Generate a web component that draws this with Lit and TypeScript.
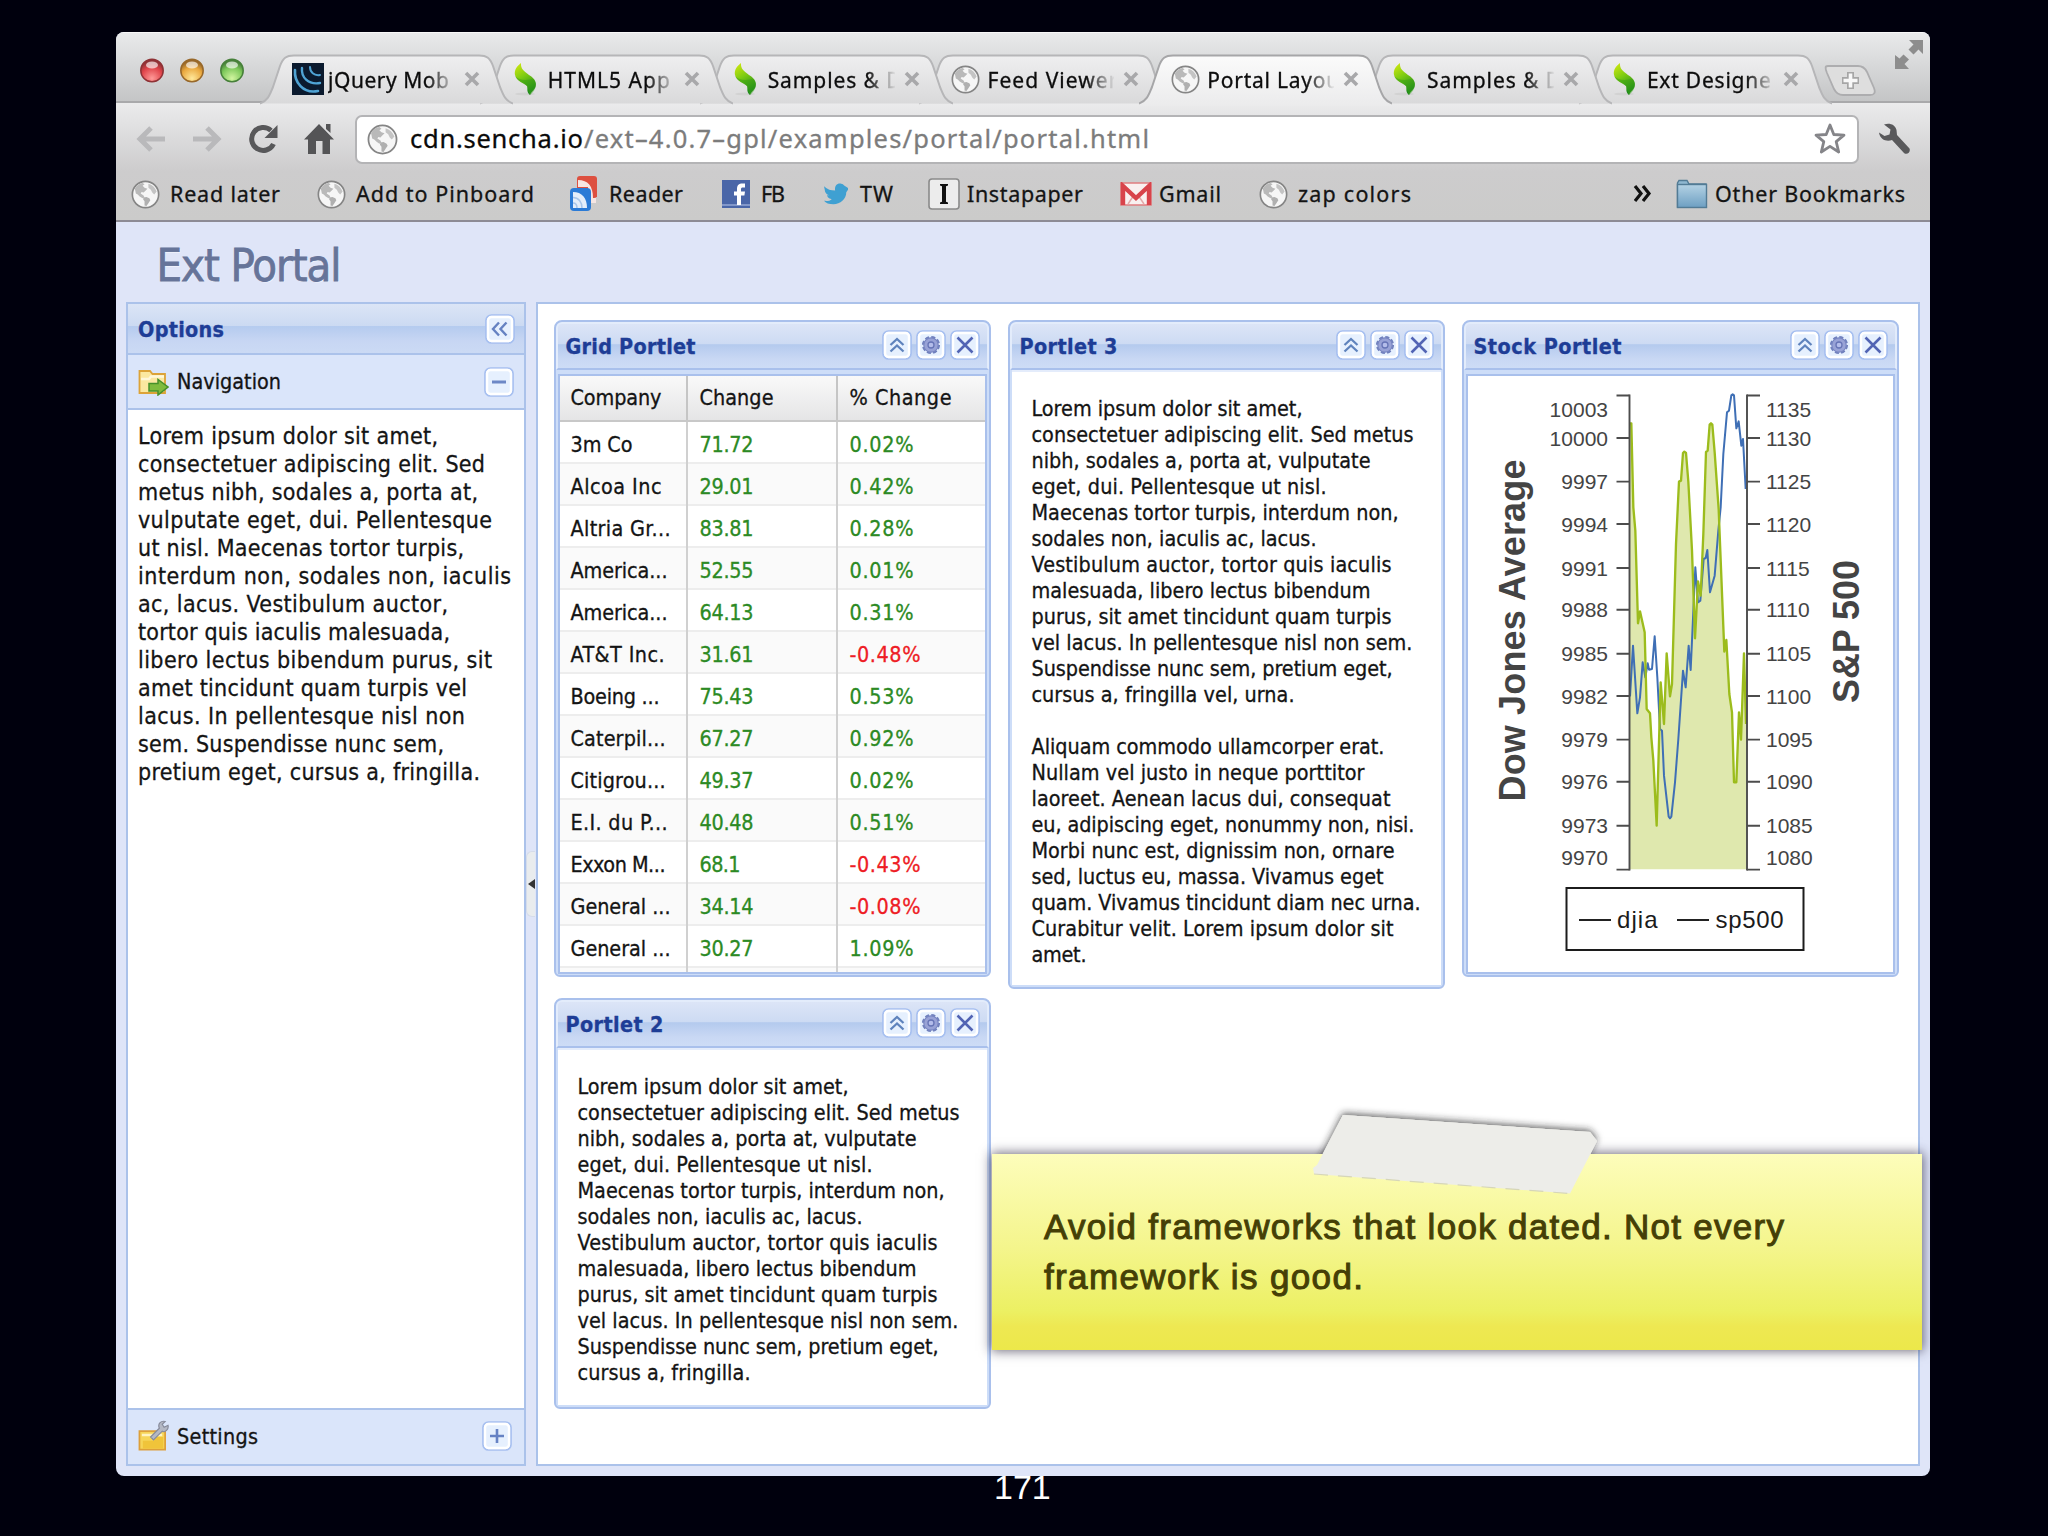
import { LitElement, html, css, svg } from "lit";
import { customElement, property } from "lit/decorators.js";

/* One line of text, tracked so that it fills the width given in w. */
@customElement("fit-text")
class FitText extends LitElement {
  @property({ type: Number }) w = 0;
  @property() text = "";
  static styles = css`
    :host { display: block; white-space: pre; }
    .line { display: inline-block; }
  `;
  render() {
    return html`<span class="line">${this.text}</span>`;
  }
  updated() {
    const el = this.renderRoot.querySelector(".line") as HTMLElement;
    if (!el || !this.w || !this.text) return;
    el.style.letterSpacing = "0px";
    const natural = el.getBoundingClientRect().width;
    const n = Math.max(1, this.text.length - 1);
    el.style.letterSpacing = ((this.w - natural) / n).toFixed(3) + "px";
  }
}

const t = (text: string, w: number, cls = "") => html`<fit-text class=${cls} .text=${text} .w=${w}></fit-text>`;

const globe = (s: number) => html`<svg width=${s} height=${s} viewBox="0 0 30 30">
  <circle cx="15" cy="15" r="13.6" fill="#f6f6f6" stroke="#858585" stroke-width="1.7"/>
  <path d="M4 9C6 5 9 3.5 12 3L14 4.5L12 6L14 8L17 9L15 11L13 13L11 12.5L10 14L13 16L14 18L12 19L9 17L7 15L5 14Z" fill="#b9b9b9"/>
  <path d="M13 18L16 17.5L19 19L20 21L18 24L16 27L14 26.5L14 22L12.5 20Z" fill="#b0b0b0"/>
  <path d="M18 4C22 5 25 8 26.5 12L24 15L22 13L20.5 10L18 8Z" fill="#c4c4c4"/>
</svg>`;

const jquery = html`<svg width="32" height="32" viewBox="0 0 32 32">
  <rect width="32" height="32" fill="#0b1a2e"/>
  <g fill="none" stroke="#4fa3d4" stroke-linecap="round">
    <path d="M3 7C2 19 11 31 26 28" stroke-width="2.600"/>
    <path d="M10 5C9 14 16 22 28 20" stroke-width="2.400"/>
    <path d="M18 4C18 9 22 13 28 12" stroke-width="2"/>
  </g>
</svg>`;

const sencha = html`<svg width="26" height="34" viewBox="0 0 26 34">
  <defs><linearGradient id="sg" x1="0" y1="0" x2="0.4" y2="1">
    <stop offset="0" stop-color="#d8ea10"/><stop offset=".5" stop-color="#7ccb12"/><stop offset="1" stop-color="#1f8a1c"/>
  </linearGradient></defs>
  <ellipse cx="13" cy="32" rx="10" ry="1.5" fill="#d2d2d2"/>
  <path d="M9 1C8.500 7 12 9 17 13C24 17 25 22 23 26C21 29 19 30 18 33C14 30 16 26 15 24C12 21 5 20 3 13C2 8 5 4 9 1Z" fill="url(#sg)"/>
  <path d="M3 14C6 20 12 20 15 24C17 27 16 30 18 33C25 27 26 20 20 17C13 19 7 18 3 14Z" fill="#36a015" opacity=".5"/>
</svg>`;

const closeX = html`<svg width="16" height="16" viewBox="0 0 16 16"><path d="M2 2L14 14M14 2L2 14" stroke="#a8a8aa" stroke-width="3.600"/></svg>`;

const bmIcons: Record<string, unknown> = {
  globe: globe(29),
  reader: html`<svg width="32" height="38" viewBox="0 0 32 38">
    <rect x="7" y="1" width="20" height="22" rx="3" fill="#dd5040"/><path d="M8 5c10 0 15 6 15 18h3v5h-8V12h-10z" fill="#f6e6e3"/>
    <path d="M22 5h5v17h-2C25 14 24 9 22 5z" fill="#dd5040"/>
    <rect x="0" y="13" width="21" height="23" rx="4" fill="#2b7bd6"/>
    <path d="M3 17c9 0 14 6 14 16h-14z" fill="#e4eefa"/><path d="M3 22.500c5.500 0 9 4.500 9 10.500M3 28c2.500 0 4 2 4 5" fill="none" stroke="#a9c6ea" stroke-width="1.500"/>
  </svg>`,
  fb: html`<svg width="28" height="28" viewBox="0 0 28 28"><rect width="28" height="28" fill="#4a66a8"/>
    <rect y="24" width="28" height="2" fill="#8297c9"/>
    <path d="M15 25V15.500h-3v-4h3V9c0-3.800 2-5.500 5.300-5.500H23v4h-2c-1.600 0-2 .6-2 2v2h4l-.6 4H19V25z" fill="#fff"/></svg>`,
  tw: html`<svg width="30" height="24" viewBox="0 0 30 28"><path d="M1 5C5 9 9 10 14 10C13 4 17 1 21 2C23 2.300 24 3.500 25 4.500L29 7L29 9L27 12C27 20 20 26 12 26C7 26 3 25 1 22C5 22.500 8 22 10 20C6 19.500 5 17 4.500 15.500L7 15.500C3 14 2 11 2 9.500Z" fill="#3fa0d2"/></svg>`,
  insta: html`<svg width="32" height="32" viewBox="0 0 32 32"><rect x="1" y="1" width="30" height="30" rx="3" fill="#ececec" stroke="#8a8a8a" stroke-width="1.600"/>
    <path d="M12 6h8v1.600l-2 .6v15.600l2 .6V26h-8v-1.600l2-.6V8.200l-2-.6z" fill="#111"/></svg>`,
  gmail: html`<svg width="32" height="24" viewBox="0 0 32 24"><rect x="1" y="1" width="30" height="22" fill="#f9f0f0" stroke="#e07d80" stroke-width="1.500"/>
    <path d="M8 22L14 13M24 22L18 13" stroke="#e3a9a9" stroke-width="1.500"/>
    <path d="M3 23V4L16 16L29 4V23" fill="none" stroke="#d8434b" stroke-width="4.400"/></svg>`,
  folder: html`<svg width="32" height="30" viewBox="0 0 32 30">
    <defs><linearGradient id="fg" x1="0" y1="0" x2="0" y2="1"><stop offset="0" stop-color="#b4d2e4"/><stop offset="1" stop-color="#6d9fc2"/></linearGradient></defs>
    <path d="M1.500 28V4L3 1.500H11L13 5H30V28Z" fill="#8fb7d0" stroke="#527b95" stroke-width="1.400"/>
    <rect x="1.500" y="5.500" width="29" height="23" fill="url(#fg)" stroke="#527b95" stroke-width="1.400"/></svg>`,
};

const glyphs: Record<string, unknown> = {
  up: svg`<path d="M8 14.500L14.500 8.500L21 14.500M8 21L14.500 15L21 21" fill="none" stroke="#5f83bd" stroke-width="2.300"/>`,
  gear: svg`<circle cx="14.500" cy="14.500" r="7.800" fill="none" stroke="#7080bd" stroke-width="2.500" stroke-dasharray="4 2.130"/>
    <circle cx="14.500" cy="14.500" r="7.200" fill="#98a2d6" stroke="#7886c2" stroke-width="1.200"/><circle cx="14.500" cy="14.500" r="3" fill="#b4bdea" stroke="#6674b6" stroke-width="1.300"/>`,
  close: svg`<path d="M7 7L22 22M22 7L7 22" fill="none" stroke="#5264b4" stroke-width="2.600"/>`,
  left: svg`<path d="M13.500 8L7.500 14.500L13.500 21M21 8L15 14.500L21 21" fill="none" stroke="#6582c2" stroke-width="2.400"/>`,
  minus: svg`<path d="M7.500 14.500H21.500" stroke="#6d88c6" stroke-width="3"/>`,
  plus: svg`<path d="M7.500 14.500H21.500M14.500 7.500V21.500" stroke="#6682c4" stroke-width="2.600"/>`,
};
const tool = (k: string) => html`<svg width="30" height="30" viewBox="-.5 -.5 30 30">
  <rect x=".5" y=".5" width="28" height="28" rx="5.500" fill="#e4edfd" stroke="#a6bff0" stroke-width="1.700"/>
  <rect x="2.500" y="2.500" width="24" height="24" rx="3.500" fill="#e6f0fe" stroke="#fff" stroke-width="2.400"/>${glyphs[k]}</svg>`;

const tabs = [
  { icon: jquery, text: "jQuery Mob", w: 121 },
  { icon: sencha, text: "HTML5 App", w: 122 },
  { icon: sencha, text: "Samples & D", w: 134 },
  { icon: globe(29), text: "Feed Viewer", w: 130 },
  { icon: globe(29), text: "Portal Layou", w: 132, active: true },
  { icon: sencha, text: "Samples & D", w: 134 },
  { icon: sencha, text: "Ext Designe", w: 124 },
];

const bookmarks = [
  { i: "globe", s: "Read later", w: 110, x: 131 },
  { i: "globe", s: "Add to Pinboard", w: 178, x: 317 },
  { i: "reader", s: "Reader", w: 74, x: 570 },
  { i: "fb", s: "FB", w: 24, x: 722 },
  { i: "tw", s: "TW", w: 33, x: 821 },
  { i: "insta", s: "Instapaper", w: 116, x: 928 },
  { i: "gmail", s: "Gmail", w: 62, x: 1120 },
  { i: "globe", s: "zap colors", w: 113, x: 1259 },
];
const bookmarkEnd = 1633;

const sideText: [string, number][] = [
  ["Lorem ipsum dolor sit amet,", 300], ["consectetuer adipiscing elit. Sed", 347], ["metus nibh, sodales a, porta at,", 340],
  ["vulputate eget, dui. Pellentesque", 354], ["ut nisl. Maecenas tortor turpis,", 326], ["interdum non, sodales non, iaculis", 373],
  ["ac, lacus. Vestibulum auctor,", 310], ["tortor quis iaculis malesuada,", 312], ["libero lectus bibendum purus, sit", 354],
  ["amet tincidunt quam turpis vel", 329], ["lacus. In pellentesque nisl non", 327], ["sem. Suspendisse nunc sem,", 306], ["pretium eget, cursus a, fringilla.", 342],
];
const lorem: [string, number][] = [
  ["Lorem ipsum dolor sit amet,", 271], ["consectetuer adipiscing elit. Sed metus", 382], ["nibh, sodales a, porta at, vulputate", 339],
  ["eget, dui. Pellentesque ut nisl.", 295], ["Maecenas tortor turpis, interdum non,", 367], ["sodales non, iaculis ac, lacus.", 285],
  ["Vestibulum auctor, tortor quis iaculis", 360], ["malesuada, libero lectus bibendum", 339], ["purus, sit amet tincidunt quam turpis", 360],
  ["vel lacus. In pellentesque nisl non sem.", 381], ["Suspendisse nunc sem, pretium eget,", 361],
];
const portlet2: [string, number][] = [...lorem, ["cursus a, fringilla.", 173]];
const portlet3: [string, number][] = [
  ...lorem, ["cursus a, fringilla vel, urna.", 263], [" ", 0],
  ["Aliquam commodo ullamcorper erat.", 353], ["Nullam vel justo in neque porttitor", 333], ["laoreet. Aenean lacus dui, consequat", 359],
  ["eu, adipiscing eget, nonummy non, nisi.", 383], ["Morbi nunc est, dignissim non, ornare", 363], ["sed, luctus eu, massa. Vivamus eget", 352],
  ["quam. Vivamus tincidunt diam nec urna.", 389], ["Curabitur velit. Lorem ipsum dolor sit", 362], ["amet.", 55],
];

const rows: [string, number, string, string][] = [
  ["3m Co", 62, "71.72", "0.02%"], ["Alcoa Inc", 91, "29.01", "0.42%"], ["Altria Gr...", 100, "83.81", "0.28%"],
  ["America...", 97, "52.55", "0.01%"], ["America...", 97, "64.13", "0.31%"], ["AT&T Inc.", 94, "31.61", "-0.48%"],
  ["Boeing ...", 89, "75.43", "0.53%"], ["Caterpil...", 95, "67.27", "0.92%"], ["Citigrou...", 95, "49.37", "0.02%"],
  ["E.I. du P...", 97, "40.48", "0.51%"], ["Exxon M...", 95, "68.1", "-0.43%"], ["General ...", 100, "34.14", "-0.08%"],
  ["General ...", 100, "30.27", "1.09%"],
];

const tickY = [396.5, 439, 482.6, 525, 569, 610.8, 654.7, 697, 740.6, 782.8, 826.7, 870.6];
const labelY = [410.5, 439, 482.6, 525, 569, 610.8, 654.7, 697, 740.6, 782.8, 826.7, 858.6];
const leftLabels = ["10003", "10000", "9997", "9994", "9991", "9988", "9985", "9982", "9979", "9976", "9973", "9970"];
const rightLabels = ["1135", "1130", "1125", "1120", "1115", "1110", "1105", "1100", "1095", "1090", "1085", "1080"];
const djia = "60,118 64,118 70,370 76,440 84,718 90,682 104,745 110,975 120,988 124,1060 130,1130 140,1325 152,895 162,1020 170,808 180,937 186,900 198,480 207,293 213,290 219,207 223,203 228,207 235,293 246,500 255,763 264,592 272,635 280,450 288,204 293,200 299,122 303,118 307,122 314,205 326,376 343,803 349,768 358,930 366,985 372,1195 379,1195 387,985 393,1067 402,808 408,1020";
const sp = "60,937 69,785 82,988 90,940 98,835 106,880 113,838 117,857 126,855 134,757 142,880 150,1035 156,1040 162,1175 176,1298 180,1303 184,1298 195,1195 205,1065 219,860 227,910 236,785 242,858 256,550 264,655 271,650 281,525 287,522 292,498 300,625 314,575 325,440 332,370 340,210 351,85 357,80 364,34 368,31 372,34 379,133 386,112 394,185 399,165 407,315";

@customElement("app-root")
class AppRoot extends LitElement {
  static styles = css`
    :host { display: block; }
    * { box-sizing: border-box; }
    svg { display: block; flex: none; }
    .slide { position: relative; width: 2048px; height: 1536px; background: #00000d; padding: 32px 0 0 116px; overflow: hidden; }
    .window { width: 1814px; height: 1444px; border-radius: 8px; overflow: hidden; background: #dfe5f8; display: flex; flex-direction: column;
      font-family: "DejaVu Sans Condensed", "DejaVu Sans", sans-serif; font-stretch: condensed; color: #141414; -webkit-text-stroke: .3px; }
    .strip { height: 71px; flex: none; display: flex; align-items: flex-start; background: linear-gradient(#e9eaeb, #dcddde 35%, #c4c5c6);
      border-top: 1px solid #f8f8f8; border-bottom: 2px solid #a9a9ab; }
    .lights { display: flex; gap: 16px; padding: 25px 0 0 24px; width: 144px; flex: none; }
    .tabs { display: flex; margin-top: 21px; }
    .tab { position: relative; width: 253px; height: 50px; margin-right: -33.2px; flex: none; display: flex; align-items: center; padding-left: 32px; }
    .tab .shape { position: absolute; left: 0; top: 0; }
    .ticon { position: relative; width: 36px; }
    .tlabel { position: relative; width: 127px; overflow: hidden; font: 21px/30px "Noto Sans", sans-serif; color: #0c0c0c; margin-top: 1px;
      -webkit-mask-image: linear-gradient(90deg, #000 78%, transparent 101%); mask-image: linear-gradient(90deg, #000 78%, transparent 101%); }
    .tclose { position: relative; margin-left: 9px; }
    .newtab { margin: 30px 0 0 25px; }
    .full { margin: 7px 0 0 16px; }
    .toolbar { height: 119px; flex: none; background: linear-gradient(#ebebec, #dbdbdc 30%, #cdcccd 58%, #cbcbca); border-bottom: 2px solid #8d8b95; }
    .nav { display: flex; align-items: center; gap: 26px; padding: 11px 0 0 20px; height: 61px; }
    .omni { width: 1504px; height: 49px; margin-left: -5px; border: 2px solid #b4b4b6; border-radius: 7px; background: #fff; display: flex; align-items: center; padding: 0 10px; }
    .url { display: flex; margin: -3px 0 0 12px; font: 25.500px/44px "Noto Sans", sans-serif; flex: 1; }
    .host { color: #0a0a0a; width: 174px; }
    .path { color: #7c7c7c; }
    .wrench { margin-left: -7px; }
    .marks { display: flex; align-items: center; height: 56px; padding: 4px 0 0 15px; font: 21.500px/30px "Noto Sans", sans-serif; color: #141414; }
    .mark { display: flex; align-items: center; flex: none; }
    .slot { width: 39px; flex: none; }
    .more { width: 43px; flex: none; }
    .head { height: 80px; flex: none; padding: 16px 0 0 40.500px; font-size: 45px; line-height: 56px; color: #667499; text-shadow: 1px 1px 0 #f0f3fc; -webkit-text-stroke: .8px #667499; }
    .body { display: flex; height: 1164px; padding-left: 10px; flex: none; }
    .side { width: 400px; border: 2px solid #abc2ea; display: flex; flex-direction: column; background: #fff; }
    .bar { display: flex; align-items: center; justify-content: space-between; padding: 0 9px 0 10px; }
    .options { height: 51px; padding-top: 1px; border-bottom: 2px solid #abc2ea; background: linear-gradient(#dbe5f6, #ccdaf2 44%, #b5cbef 46%, #c7d6f3 75%, #cbdaf4);
      font-size: 21.400px; font-weight: bold; color: #1e3d96; }
    .acc { height: 55px; background: #dae5fa; border-bottom: 2px solid #abc2ea; font-size: 21.400px; padding-right: 10px; }
    .acc .lab { display: flex; align-items: center; gap: 8px; }
    .sidebody { flex: 1; padding: 12px 0 0 10px; font-size: 23px; line-height: 28px; }
    .settings { border-bottom: 0; border-top: 2px solid #abc2ea; height: 56px; padding: 0 12px 2px 10px; }
    .split { width: 10px; display: flex; align-items: center; }
    .handle { width: 9px; height: 66px; background: #e9ecee; border-radius: 6px 0 0 6px; display: flex; align-items: center; border: 1px solid #d5dcea; border-right: 0; }
    .main { width: 1384px; border: 2px solid #abc2ea; background: #fff; display: flex; align-items: flex-start; gap: 17px; padding: 16px 0 0 15.500px; }
    .col { display: flex; flex-direction: column; gap: 21px; width: 437px; }
    .portlet { border: 2px solid #a9c0ec; border-radius: 8px 8px 6px 6px; background: #cdddf8; display: flex; flex-direction: column; overflow: hidden; }
    .ptitle { height: 48px; flex: none; border: 2px solid #e3ecfb; border-bottom: 2px solid #a9c0ec; border-radius: 6px 6px 0 0;
      background: linear-gradient(#dce5f7, #cddbf3 45%, #b4caee 47%, #c9d8f4 80%, #cddcf6);
      display: flex; align-items: center; padding: 0 7px 0 8px; font-size: 21.400px; font-weight: bold; color: #1e3d96; }
    .ptitle .name { flex: 1; }
    .tools { display: flex; gap: 4px; padding-bottom: 2px; }
    .text { margin: 0 2px 2px; background: #fff; padding: 24px 0 0 20px; font-size: 21.400px; line-height: 26px; flex: 1; border-top: 2px solid #e4ecfb; }
    .inner { margin: 4px 2px 1px; border: 2px solid #a9c0ec; background: #fff; overflow: hidden; flex: 1; }
    .p1, .p4 { height: 657px; } .p2 { height: 411px; } .p3 { height: 669px; }
    .grid { font-size: 21.400px; }
    .row { display: grid; grid-template-columns: 128px 150px 1fr; height: 42px; line-height: 36px; border-bottom: 2px solid #ededed; }
    .row:nth-child(odd) { background: #fafafa; }
    .row .cell { padding: 5px 0 0 12px; border-right: 2px solid #d0d0d0; height: 42px; }
    .row .cell:last-child { border-right: 0; }
    .row .cell:first-child { padding-left: 11px; }
    .row.th { height: 46px; line-height: 44px; background: linear-gradient(#f9f9f9, #e5e5e6); border-bottom: 2px solid #c8c8c8; }
    .row.th .cell { padding-top: 0; height: 44px; border-color: #c5c5c5; }
    .up { color: #2c8a24; } .down { color: #ee1c25; }
    .arial { font-family: "Liberation Sans", Arial, sans-serif; }
    .note { position: absolute; left: 992px; top: 1154px; width: 930px; height: 196px; background: linear-gradient(#fdfdbb, #f4f58c 48%, #ecf063 80%, #eee852 88%, #ece84a);
      box-shadow: 0 0 11px 1px rgba(30, 25, 50, .65); padding: 48px 0 0 52px; font: 35px/50px "Liberation Sans", Arial, sans-serif; color: #453f06; -webkit-text-stroke: 1px #453f06; }
    .tape { position: absolute; left: 1300px; top: 1100px; }
    .page { position: relative; width: 57px; margin: -11px 0 0 878px; font: 34px/44px "Liberation Sans", Arial, sans-serif; color: #fff; }
  `;

  light(c1: string, c2: string, c3: string, id: string) {
    return html`<svg width="24" height="25" viewBox="0 0 24 25">
      <defs><radialGradient id=${id} cx=".5" cy=".85" r=".75"><stop offset="0" stop-color=${c1}/><stop offset=".65" stop-color=${c2}/><stop offset="1" stop-color=${c3}/></radialGradient></defs>
      <circle cx="12" cy="12.500" r="11.200" fill="url(#${id})" stroke=${c3} stroke-width="1.500"/>
      <ellipse cx="12" cy="7" rx="6" ry="3.600" fill="#fff" opacity=".65"/></svg>`;
  }

  shape(active: boolean, i: number) {
    const d = "M0 49.500C8 47 10 40 13 33L20 12C23 4 26 1.500 34 1.500H219C227 1.500 230 4 233 12L240 33C243 40 245 47 253 49.500";
    return html`<svg class="shape" width="253" height="52" viewBox="0 0 253 52">
      <defs><linearGradient id="t${i}" x1="0" y1="0" x2="0" y2="1">
        <stop offset="0" stop-color=${active ? "#fbfbfb" : "#efeff0"}/><stop offset="1" stop-color=${active ? "#ebebec" : "#d9d9da"}/></linearGradient></defs>
      <path d=${d + (active ? "V52H0Z" : "Z")} fill="url(#t${i})"/>
      <path d=${d} fill="none" stroke=${active ? "#a6a6a8" : "#b6b6b8"} stroke-width="2"/></svg>`;
  }

  portlet(cls: string, name: string, w: number, content: unknown) {
    return html`<section class="portlet ${cls}">
      <div class="ptitle">${t(name, w, "name")}<div class="tools">${tool("up")}${tool("gear")}${tool("close")}</div></div>
      ${content}</section>`;
  }

  chrome() {
    return html`
      <div class="strip">
        <div class="lights">
          ${this.light("#ff9a98", "#e0444a", "#8f3236", "lr")}
          ${this.light("#ffe89a", "#eaa83e", "#98682a", "ly")}
          ${this.light("#d2f5a0", "#7dc85a", "#47803a", "lg")}
        </div>
        <div class="tabs">${tabs.map((b, i) => html`
          <div class="tab" style="z-index:${b.active ? 20 : 10 - i}">${this.shape(!!b.active, i)}
            <div class="ticon">${b.icon}</div><div class="tlabel">${t(b.text, b.w)}</div><div class="tclose">${closeX}</div>
          </div>`)}
        </div>
        <svg class="newtab" width="54" height="36" viewBox="0 0 54 36">
          <path d="M4 3H34C39 3 41 5 43 9L50 25C52 30 50 32 46 32H19C14 32 12 30 10 26L3 10C1 5 1 3 4 3Z" fill="#dedede" stroke="#adadaf" stroke-width="1.800"/>
          <path d="M26.500 9V26M18 17.500H35" stroke="#a6a6a6" stroke-width="7"/><path d="M26.500 10.500V24.500M19.500 17.500H33.500" stroke="#f8f8f8" stroke-width="3.600"/></svg>
        <svg class="full" width="30" height="30" viewBox="0 0 30 30">
          <path d="M15 1H29V15L24.500 10.500L19.500 15.500L14.500 10.500L19.500 5.500Z" transform="translate(0 -1)" fill="#8d8d8d"/>
          <path d="M1 15L5.500 18.500L9.500 14.500L15 19.500L10.500 24L15 29H1Z" fill="#8d8d8d"/></svg>
      </div>
      <div class="toolbar">
        <div class="nav">
          <svg width="30" height="30" viewBox="0 0 30 30"><path d="M15 4L4 15L15 26M4 15H29" fill="none" stroke="#b9b9bb" stroke-width="5"/></svg>
          <svg width="30" height="30" viewBox="0 0 30 30"><path d="M15 4L26 15L15 26M26 15H1" fill="none" stroke="#b9b9bb" stroke-width="5"/></svg>
          <svg width="30" height="30" viewBox="0 0 30 30"><path d="M25.500 20A11.500 11.500 0 1 1 23 6.500" fill="none" stroke="#58585a" stroke-width="5"/><path d="M29.500 1V14H16.500Z" fill="#58585a"/></svg>
          <svg width="30" height="30" viewBox="0 0 30 30"><path d="M15 0L30 15.500H26V30H18.500V17H12V30H4V15.500H0Z" fill="#545456"/><path d="M22 0H26.500V9L22 5Z" fill="#545456"/></svg>
          <div class="omni">${globe(31)}
            <div class="url">${t("cdn.sencha.io", 173, "host")}${t("/ext–4.0.7–gpl/examples/portal/portal.html", 565, "path")}</div>
            <svg width="34" height="34" viewBox="0 0 34 34"><path d="M17 3L20.800 12.500L31 13.200L23.200 19.700L25.700 30L17 24.400L8.300 30L10.800 19.700L3 13.200L13.200 12.500Z" fill="#fff" stroke="#858589" stroke-width="2.800" stroke-linejoin="round"/></svg>
          </div>
          <svg class="wrench" width="33" height="32" viewBox="0 0 33 32"><path d="M6 1.500C11-.5 17 1 18.500 7L19 12L31.500 25.500C33 29 29 32.500 26 30L14 17C9 19 2 17 1 9.500L6.500 13L11.500 11.500L12.500 6.500Z" fill="#59595b"/></svg>
        </div>
        <div class="marks">
          ${bookmarks.map((b, i) => html`<div class="mark" style="width:${(bookmarks[i + 1]?.x ?? bookmarkEnd) - b.x}px"><div class="slot">${bmIcons[b.i]}</div>${t(b.s, b.w)}</div>`)}
          <svg class="more" width="43" height="20" viewBox="0 0 43 20"><path d="M2 2L8 9.500L2 17M10 2L16 9.500L10 17" fill="none" stroke="#111" stroke-width="3.200"/></svg>
          <div class="mark"><div class="slot">${bmIcons.folder}</div>${t("Other Bookmarks", 190)}</div>
        </div>
      </div>`;
  }

  chart() {
    return html`<div class="inner"><svg class="arial" width="425" height="595" viewBox="1468 377 425 595">
      <g transform="translate(1610 385) scale(.33333)" fill="none" stroke-linejoin="round">
        <polygon points=${"60,1456 " + djia + " 408,1456"} fill="#bccf55" fill-opacity=".48"/>
        <polyline points=${sp} stroke="#3f6fb5" stroke-width="6"/>
        <polyline points=${djia} stroke="#9cbc1c" stroke-width="7"/>
      </g>
      <g stroke="#4c4c4c" stroke-width="1.900" fill="none">
        <path d="M1629.500 395.500V871.500M1747 395.500V871.500"/>
        ${tickY.map(y => svg`<path d="M1616.500 ${y}H1629.500M1747 ${y}H1760"/>`)}
      </g>
      <g font-size="21" fill="#444">
        ${labelY.map((y, i) => svg`<text x="1608" y=${y + 7.5} text-anchor="end">${leftLabels[i]}</text><text x="1766" y=${y + 7.5}>${rightLabels[i]}</text>`)}
      </g>
      <g font-weight="bold" fill="#444">
        <text transform="translate(1525 802.500) rotate(-90)" font-size="36" textLength="342">Dow Jones Average</text>
        <text transform="translate(1858.500 704) rotate(-90)" font-size="36" textLength="143">S&amp;P 500</text>
      </g>
      <rect x="1566.500" y="889" width="237" height="62" fill="#fff" stroke="#1c1c1c" stroke-width="2"/>
      <path d="M1579 921H1611M1677 921H1709" stroke="#222" stroke-width="2"/>
      <g font-size="24" fill="#1b1b1b"><text x="1617" y="928.500" textLength="40.500">djia</text><text x="1715.500" y="928.500" textLength="68">sp500</text></g>
    </svg></div>`;
  }

  grid() {
    return html`<div class="inner grid">
      <div class="row th"><div class="cell">${t("Company", 91)}</div><div class="cell">${t("Change", 74)}</div><div class="cell">${t("% Change", 102)}</div></div>
      ${rows.map(([n, w, a, b]) => html`<div class="row"><div class="cell">${t(n, w)}</div>
        <div class="cell up">${t(a, a.length < 5 ? 41 : 54)}</div>
        <div class="cell ${b[0] === "-" ? "down" : "up"}">${t(b, b[0] === "-" ? 71 : 64)}</div></div>`)}
      <div class="row"><div class="cell"></div><div class="cell"></div><div class="cell"></div></div>
    </div>`;
  }

  render() {
    return html`<div class="slide">
      <div class="window">
        ${this.chrome()}
        <div class="head">${t("Ext Portal", 185)}</div>
        <div class="body">
          <div class="side">
            <div class="bar options">${t("Options", 86)}${tool("left")}</div>
            <div class="bar acc"><div class="lab">
              <svg width="31" height="28" viewBox="0 0 31 28"><path d="M1.500 25V3H12L14.500 6H27V25Z" fill="#fbe8a0" stroke="#dca338" stroke-width="1.800"/><path d="M3 11H11L13 8.500H26" fill="none" stroke="#fff7d8" stroke-width="2.500"/><path d="M11 15.500H20V11.500L30 19L20 27V23H11Z" fill="#7fbb3d" stroke="#47902a" stroke-width="1.500"/></svg>
              ${t("Navigation", 104)}</div>${tool("minus")}</div>
            <div class="sidebody">${sideText.map(([s, w]) => t(s, w))}</div>
            <div class="bar acc settings"><div class="lab">
              <svg width="31" height="32" viewBox="0 0 32 32"><path d="M1.500 30V11H28V30Z" fill="#f6d558" stroke="#dd9f3a" stroke-width="1.800"/><path d="M4 15H25" stroke="#fff3c0" stroke-width="2.500"/><path d="M5 29V21H16L19 17H26V29Z" fill="#f0c43a"/><path d="M13 17L22 8C20 3 24 0 28 1L25 4L27 7L31 5C32 9 28 13 25 11L16 20Z" fill="#b4b8c4" stroke="#868a9a" stroke-width="1.200"/></svg>
              ${t("Settings", 81)}</div>${tool("plus")}</div>
          </div>
          <div class="split"><div class="handle"><svg width="9" height="12" viewBox="0 0 9 12"><path d="M8 1V11L1 6Z" fill="#333"/></svg></div></div>
          <div class="main">
            <div class="col">
              ${this.portlet("p1", "Grid Portlet", 130, this.grid())}
              ${this.portlet("p2", "Portlet 2", 98, html`<div class="text">${portlet2.map(([s, w]) => t(s, w))}</div>`)}
            </div>
            <div class="col">${this.portlet("p3", "Portlet 3", 98, html`<div class="text">${portlet3.map(([s, w]) => t(s, w))}</div>`)}</div>
            <div class="col">${this.portlet("p4", "Stock Portlet", 148, this.chart())}</div>
          </div>
        </div>
      </div>
      <div class="page">171</div>
      <div class="note">${t("Avoid frameworks that look dated. Not every", 740)}${t("framework is good.", 319)}</div>
      <svg class="tape" width="312" height="110" viewBox="1300 1100 312 110">
        <defs><filter id="ts" x="-10%" y="-30%" width="120%" height="160%"><feDropShadow dx="0" dy="-2" stdDeviation="3.500" flood-color="#222" flood-opacity=".7"/></filter>
        <clipPath id="tc"><rect x="1300" y="1090" width="312" height="64"/></clipPath></defs>
        <path d="M1343 1115L1590 1132L1597 1141L1570 1193.500L1314 1174L1313 1168L1317 1165Z" fill="#eeeee8" filter="url(#ts)" clip-path="url(#tc)"/>
        <path d="M1343 1115L1590 1132L1597 1141L1570 1193.500L1314 1174L1313 1168L1317 1165Z" fill="#edede9"/>
        <path d="M1314 1174L1570 1193.500" stroke="#d6d6b8" stroke-width="1.200" stroke-dasharray="14 10"/>
      </svg>
    </div>`;
  }
}
